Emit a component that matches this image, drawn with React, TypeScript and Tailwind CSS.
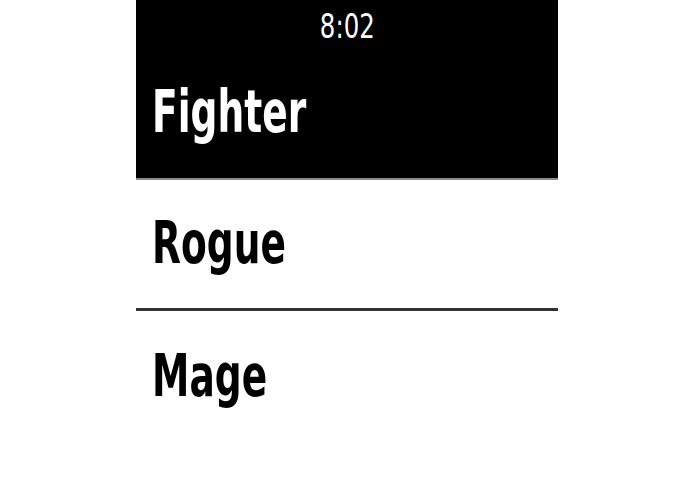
import React from "react";

const rows = [
  { label: "Fighter", selected: true },
  { label: "Rogue", selected: false },
  { label: "Mage", selected: false },
];

export default function App() {
  return (
    <div className="w-full h-[494px] bg-white flex pl-[136px]">
      <div
        className="w-[422px] h-[494px] flex flex-col bg-white"
        style={{ fontFamily: '"DejaVu Sans Condensed", "DejaVu Sans", sans-serif' }}
      >
        {/* status bar */}
        <div className="h-[47px] bg-black text-white flex items-start justify-center pt-[9px] text-[34px] leading-none">
          <span className="inline-block scale-x-[0.8]">8:02</span>
        </div>

        {rows.map((row, i) => (
          <div
            key={row.label}
            className={[
              "flex items-center pl-[16px] text-[58px] font-bold leading-none",
              row.selected ? "h-[133px] bg-black text-white border-b-2 border-[#8a8a8a]" : "h-[131px] bg-white text-black",
              i === 1 ? "border-b-[3px] border-[#333333]" : "",
            ].join(" ")}
          >
            <span className="inline-block origin-left scale-x-[0.72] -mt-[2px]">{row.label}</span>
          </div>
        ))}
      </div>
    </div>
  );
}
